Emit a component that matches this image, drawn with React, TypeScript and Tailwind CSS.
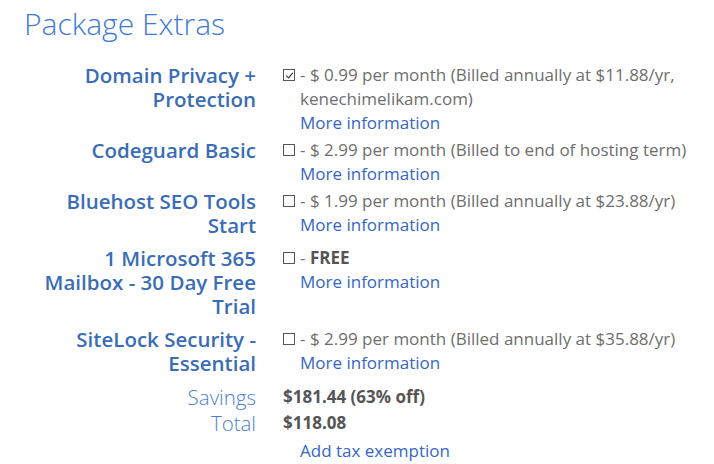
import React from "react";

type Extra = {
  name: string;
  checked?: boolean;
  price: React.ReactNode;
};

const extras: Extra[] = [
  {
    name: "Domain Privacy + Protection",
    checked: true,
    price: "- $ 0.99 per month (Billed annually at $11.88/yr, kenechimelikam.com)",
  },
  { name: "Codeguard Basic", price: "- $ 2.99 per month (Billed to end of hosting term)" },
  { name: "Bluehost SEO Tools Start", price: "- $ 1.99 per month (Billed annually at $23.88/yr)" },
  {
    name: "1 Microsoft 365 Mailbox - 30 Day Free Trial",
    price: (
      <>
        - <span className="font-bold text-[#555]">FREE</span>
      </>
    ),
  },
  { name: "SiteLock Security - Essential", price: "- $ 2.99 per month (Billed annually at $35.88/yr)" },
];

function Checkbox({ checked }: { checked?: boolean }) {
  return (
    <span className="mt-[6px] mr-[5px] flex h-[12px] w-[12px] shrink-0 items-center justify-center border border-[#555] bg-white">
      {checked && (
        <svg viewBox="0 0 10 10" className="h-[9px] w-[9px]">
          <path d="M1.5 5.2 L4 7.6 L8.6 2.2" fill="none" stroke="#333" strokeWidth="1.3" />
        </svg>
      )}
    </span>
  );
}

export default function App() {
  return (
    <div className="min-h-[464px] w-[714px] bg-white pl-[24px] pt-[2px]" style={{ fontFamily: '"Open Sans", sans-serif' }}>
      <h2 className="text-[30px] font-light leading-[44px] text-[#3d7bd6]">Package Extras</h2>
      <div className="mt-[17px] grid grid-cols-[232px_1fr] gap-x-[27px]">
        {extras.map((e) => (
          <React.Fragment key={e.name}>
            <div className="pb-[9px] pl-[14px] text-right text-[20.5px] font-semibold leading-[24px] text-[#3a6db5]">{e.name}</div>
            <div className="flex pb-[3px] text-[17px] leading-[24px] text-[#6e6e6e]">
              <Checkbox checked={e.checked} />
              <div>
                <div>{e.price}</div>
                <a href="#" className="text-[#3566c6]">More information</a>
              </div>
            </div>
          </React.Fragment>
        ))}
        <div className="text-right text-[20.5px] font-light leading-[26px] text-[#4b7fcc]">Savings</div>
        <div className="text-[17px] font-bold leading-[26px] text-[#555]">$181.44 (63% off)</div>
        <div className="text-right text-[20.5px] font-light leading-[26px] text-[#4b7fcc]">Total</div>
        <div className="text-[17px] font-bold leading-[26px] text-[#555]">$118.08</div>
        <div />
        <div className="pl-[17px] pt-[2px] text-[17px] leading-[26px]">
          <a href="#" className="text-[#3566c6]">Add tax exemption</a>
        </div>
      </div>
    </div>
  );
}
